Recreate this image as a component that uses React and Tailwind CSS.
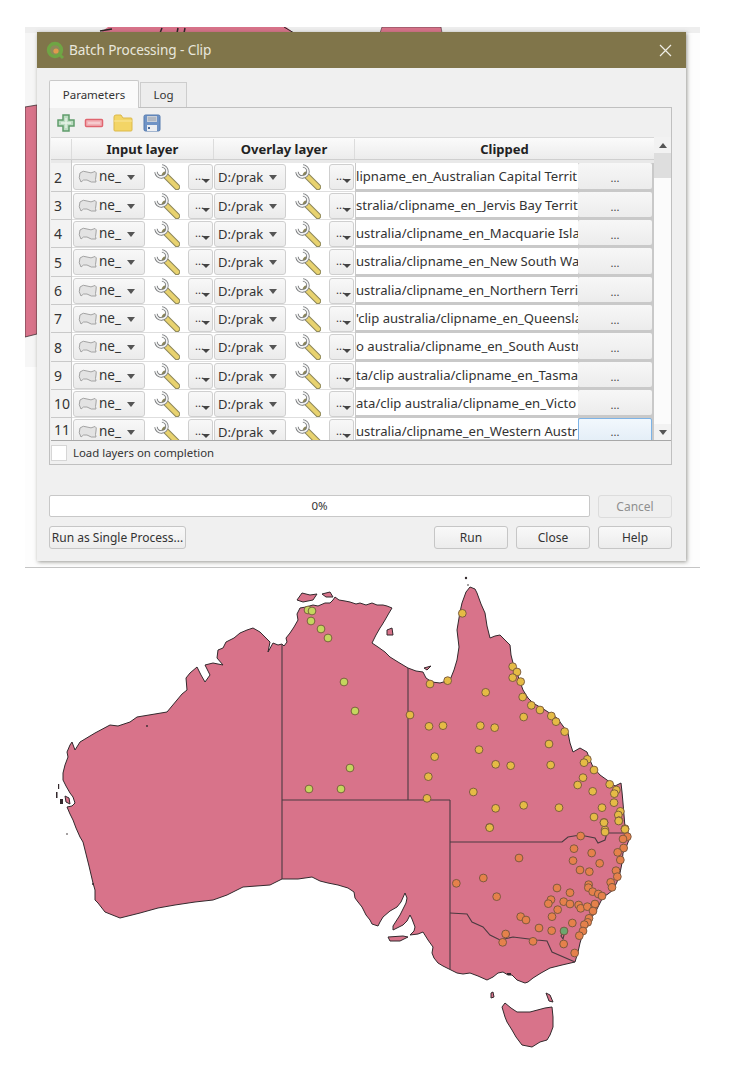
import React from "react";

const font = { fontFamily: '"Noto Sans", "Open Sans", sans-serif' };

const rows = [
  { n: "2", h: "h-[29px]", text: "lipname_en_Australian Capital Territ" },
  { n: "3", h: "h-[28px]", text: "stralia/clipname_en_Jervis Bay Territ" },
  { n: "4", h: "h-[28px]", text: "ustralia/clipname_en_Macquarie Isla" },
  { n: "5", h: "h-[29px]", text: "ustralia/clipname_en_New South Wa" },
  { n: "6", h: "h-[28px]", text: "ustralia/clipname_en_Northern Territ" },
  { n: "7", h: "h-[28px]", text: "'clip australia/clipname_en_Queensla" },
  { n: "8", h: "h-[29px]", text: "o australia/clipname_en_South Austr" },
  { n: "9", h: "h-[28px]", text: "ta/clip australia/clipname_en_Tasma" },
  { n: "10", h: "h-[28px]", text: "ata/clip australia/clipname_en_Victo" },
  { n: "11", h: "h-[24px]", text: "ustralia/clipname_en_Western Austr", last: true },
];

const yellowGreen = [[308,610],[312,611],[311,621],[321,629],[328,638],[344,682],[355,711],[350,768],[309,789],[341,789]];
const z6 = [[307,130],[210,342],[263,332],[458,290],[471,306],[458,323],[482,335],[377,367],[488,381],[514,406],[540,420],[491,441],[574,438],[588,455],[614,485],[150,435],[207,469],[249,467],[361,467],[404,473],[567,522],[357,539],[224,560],[407,583],[452,587],[572,585],[682,568],[672,578],[702,600],[669,623],[653,645],[205,620],[340,666],[698,664],[749,643],[769,660],[763,671],[762,698],[201,685],[407,715],[491,706],[597,713],[726,713],[702,741],[732,757],[781,724],[775,735],[777,752],[389,772],[795,776],[735,780]];
const yellow = z6.map(([x, y]) => [x / 3 + 360, y / 3 + 570]).concat([[689,23],[1032,8],[1076,3],[1095,28],[1035,36]].map(([x, y]) => [x / 3 + 260, y / 3 + 820]));
const orange = [[962,48],[1102,50],[1089,57],[1091,84],[942,86],[995,99],[1073,97],[939,122],[1081,120],[1019,130],[777,114],[960,150],[988,155],[1068,152],[1072,170],[670,174],[589,190],[1052,187],[986,194],[985,203],[1056,202],[891,204],[930,218],[998,215],[1015,222],[1026,228],[710,230],[873,239],[865,251],[911,245],[930,252],[956,255],[962,265],[982,260],[1005,252],[999,273],[893,269],[876,290],[782,290],[798,300],[987,295],[983,307],[973,314],[937,309],[969,333],[958,347],[837,324],[875,332],[737,342],[728,367],[819,364],[911,372],[944,399]].map(([x, y]) => [x / 3 + 260, y / 3 + 820]);

const mainland = "M282 644 L284 646 L287 642 L286 638 L290 633 L294 627 L298 620 L297 614 L300 608 L306 607 L313 605 L318 606 L325 603 L330 603 L333 600 L335 597 L339 600 L345 601 L350 602 L356 604 L360 603 L366 605 L372 603 L377 605 L383 605 L387 606 L392 608 L389 613 L385 620 L382 625 L380 628 L376 635 L372 643 L378 647 L385 652 L390 657 L398 662 L408 668 L416 671 L423 672 L426 678 L432 682 L440 683 L450 680 L454 670 L457 660 L459 647 L457 630 L460 612 L462 603 L466 592 L470 587 L475 589 L477 593 L481 604 L485 613 L487 626 L490 638 L495 636 L500 635 L505 640 L510 645 L511 655 L513 663 L518 676 L523 690 L528 698 L533 703 L545 710 L557 718 L563 726 L568 733 L570 743 L573 752 L580 748 L587 752 L590 760 L593 767 L600 775 L607 780 L615 786 L621 783 L622 792 L623 803 L624 815 L625 827 L627 830 L630 837 L627 845 L623 853 L622 863 L620 873 L617 882 L613 890 L608 894 L603 897 L599 905 L595 913 L591 918 L588 923 L583 933 L580 943 L578 952 L575 962 L562 965 L550 968 L541 973 L533 978 L528 982 L525 983 L517 980 L512 975 L508 975 L503 972 L498 973 L493 977 L487 980 L478 976 L470 973 L463 974 L457 973 L449 969 L443 966 L438 963 L434 958 L432 953 L433 947 L428 940 L423 932 L418 934 L410 935 L414 931 L415 927 L412 919 L410 915 L407 921 L403 925 L393 930 L393 926 L400 915 L406 903 L407 898 L405 893 L401 902 L397 907 L390 911 L383 917 L380 922 L378 926 L372 924 L370 920 L366 915 L362 907 L358 902 L355 898 L354 892 L348 888 L338 885 L328 883 L320 881 L312 877 L298 879 L282 879 L270 885 L243 887 L227 895 L213 900 L195 902 L175 905 L158 908 L140 913 L120 918 L105 912 L98 903 L95 900 L95 890 L93 883 L89 866 L85 850 L83 842 L80 837 L76 828 L73 820 L70 814 L67 807 L72 806 L75 803 L73 797 L70 793 L66 786 L63 780 L63 773 L65 765 L68 757 L67 752 L70 745 L72 742 L75 750 L80 742 L95 733 L110 725 L118 726 L130 722 L137 717 L143 716 L155 714 L167 712 L172 706 L177 700 L182 694 L187 690 L186 678 L190 673 L197 667 L201 675 L205 682 L210 675 L205 665 L213 663 L223 665 L217 658 L218 650 L223 648 L226 642 L230 640 L234 638 L240 633 L247 630 L253 628 L260 632 L265 637 L270 642 L268 652 L273 643 L278 645 Z";

const Dot = ({ p, fill }) => <circle cx={p[0]} cy={p[1]} r="3.9" fill={fill} stroke="#74553c" strokeWidth="0.9" />;

function AustraliaMap() {
  return (
    <svg width="750" height="500" viewBox="0 568 750 500" className="block">
      <g fill="#d8738a" stroke="#33292d" strokeWidth="1" strokeLinejoin="round">
        <path d={mainland} />
        <path d="M502 1007 L505 1003 L511 1008 L517 1012 L530 1012 L545 1008 L552 1007 L553 1017 L553 1027 L550 1035 L547 1040 L540 1042 L532 1047 L522 1045 L516 1037 L512 1030 L507 1022 L505 1017 Z" />
        <path d="M388 937 L403 936 L408 937 L400 941 L390 941 Z" />
        <path d="M546 993 L550 995 L553 1002 L549 1001 Z" />
        <path d="M491 993 L493 992 L494 997 L491 998 Z" />
        <path d="M297 600 L302 593 L310 595 L317 594 L313 600 L303 602 Z" />
        <path d="M322 594 L330 592 L333 597 L326 597 Z" />
        <path d="M387 630 L392 628 L393 635 L387 635 Z" />
        <path d="M424 668 L431 666 L427 670 Z" />
        <path d="M65 796 L69 798 L70 804 L66 802 Z" />
      </g>
      <g fill="none" stroke="#4b3a40" strokeWidth="1.1">
        <path d="M282 644 V879" />
        <path d="M282 800 H450" />
        <path d="M408 668 V800" />
        <path d="M450 800 V969" />
        <path d="M450 842 H562 L568 837 L580 835 L595 838 L598 843 L605 840 L607 833 L625 833" />
        <path d="M450 913 L467 914 L472 922 L483 927 L490 935 L500 940 L513 937 L537 940 L547 941 L552 952 L575 962" />
        <path d="M563 932 L561 936 L563 939 L564 935 Z" />
      </g>
      <g fill="#33292d">
        <circle cx="147" cy="726" r="0.9" />
        <rect x="58" y="784" width="1.2" height="5" />
        <rect x="56" y="792" width="1.5" height="6" />
        <rect x="60" y="799" width="3" height="5" />
        <circle cx="67" cy="834" r="0.8" />
        <circle cx="93" cy="884" r="1" />
        <circle cx="466" cy="578" r="1.2" />
        <circle cx="468" cy="585" r="0.8" />
        <rect x="507" y="973" width="4" height="2" />
      </g>
      {yellowGreen.map((p, i) => <Dot key={i} p={p} fill="#c4d65e" />)}
      {yellow.map((p, i) => <Dot key={i} p={p} fill="#e5bb45" />)}
      {orange.map((p, i) => <Dot key={i} p={p} fill="#e5814b" />)}
      <Dot p={[564, 931]} fill="#6da66e" />
    </svg>
  );
}

const QgisLogo = () => (
  <svg width="19" height="19" viewBox="0 0 19 19">
    <circle cx="9" cy="9" r="6.5" fill="#8d8a5a" stroke="#6fa544" strokeWidth="3.4" />
    <path d="M11 11 L17 17" stroke="#6fa544" strokeWidth="3" />
    <circle cx="10" cy="10" r="2.6" fill="#e09a4e" />
  </svg>
);

const PlusIcon = () => (
  <svg width="20" height="20" viewBox="0 0 20 20">
    <path d="M7 2 H13 V7 H18 V13 H13 V18 H7 V13 H2 V7 H7 Z" fill="#bcdcc2" stroke="#5f9c6b" strokeWidth="1.5" />
    <path d="M10 5 V15 M5 10 H15" stroke="#e8f3e9" strokeWidth="1.3" />
  </svg>
);
const MinusIcon = () => (
  <svg width="20" height="10" viewBox="0 0 20 10">
    <rect x="1.5" y="1.5" width="17" height="7" rx="1" fill="#f2b3b8" stroke="#e0656f" strokeWidth="1.5" />
    <path d="M4 5 H16" stroke="#f9dcde" strokeWidth="1.2" />
  </svg>
);
const FolderIcon = () => (
  <svg width="20" height="18" viewBox="0 0 20 18">
    <path d="M1 3 Q1 1 3 1 H8 L10 4 H18 Q19 4 19 5 V16 Q19 17 18 17 H2 Q1 17 1 16 Z" fill="#f3d566" stroke="#dcb94a" strokeWidth="1" />
    <path d="M1 7 H19" stroke="#f9e69a" strokeWidth="1" />
  </svg>
);
const SaveIcon = () => (
  <svg width="18" height="18" viewBox="0 0 18 18">
    <rect x="1" y="1" width="16" height="16" rx="1.5" fill="#6f93c6" stroke="#557aae" strokeWidth="1" />
    <rect x="4" y="2" width="10" height="6" fill="#c9cfd8" />
    <path d="M5 4 H13 M5 6 H13" stroke="#8d96a3" strokeWidth="0.8" />
    <rect x="4" y="11" width="10" height="6" fill="#eceef2" />
    <rect x="5" y="13" width="2" height="2" fill="#4a6a9a" />
  </svg>
);
const Wrench = () => (
  <svg width="26" height="26" viewBox="0 0 26 26">
    <path d="M11 11 L23 23" stroke="#8a8558" strokeWidth="6.4" strokeLinecap="round" />
    <path d="M12.5 12.5 L23 23" stroke="#e8d26f" strokeWidth="4.4" strokeLinecap="round" />
    <path d="M2 8 A5.5 5.5 0 1 0 8 2" fill="none" stroke="#77797b" strokeWidth="3.4" />
    <path d="M2 8 A5.5 5.5 0 1 0 8 2" fill="none" stroke="#f2f3f3" strokeWidth="1.8" />
  </svg>
);
const LayerIcon = () => (
  <svg width="20" height="14" viewBox="0 0 20 14" className="shrink-0">
    <path d="M2 3 Q5 0 9 2 Q13 4 17 1.5 Q19 2 18 6 Q17 10 18 12 Q13 13 9 10 Q5 9 3 12 Q0 8 2 3 Z" fill="#e3e3e3" stroke="#a3a3a3" strokeWidth="1" />
  </svg>
);
const Caret = () => <span className="shrink-0 ml-auto w-0 h-0 border-x-[4.5px] border-x-transparent border-t-[5px] border-t-[#555]" />;
const SmallCaret = () => <span className="absolute right-[2px] bottom-[6px] w-0 h-0 border-x-[4px] border-x-transparent border-t-[4px] border-t-[#444]" />;

const comboCls = "w-[72px] h-[26px] mt-[1px] flex items-center rounded-[3px] border border-[#cfcfcf] bg-gradient-to-b from-[#f8f8f8] to-[#ebebeb]";
const dotsCls = "relative w-[25px] h-[26px] mt-[1px] rounded-[3px] border border-[#cfcfcf] bg-gradient-to-b from-[#f8f8f8] to-[#ebebeb] text-[11px] text-[#333] pl-[6px] pt-[5px] leading-none";

function Row({ r }) {
  const last = r.last;
  return (
    <div className={`${r.h} flex shrink-0 overflow-hidden`}>
      <div className="w-[21px] shrink-0 bg-[#f3f3f3] border-r border-b border-[#c9c9c9] flex items-center pl-[3px] text-[14px] text-[#333]">{r.n}</div>
      <div className="w-[142px] shrink-0 flex border-b border-[#dedede] bg-white">
        <div className={`${comboCls} ml-[1px] pl-[4px] pr-[9px]`}>
          <LayerIcon />
          <span className="text-[13.5px] text-[#333] ml-[1px] leading-none">ne_</span>
          <Caret />
        </div>
        <div className="w-[43px] shrink-0 flex items-start justify-center pt-[1px]"><Wrench /></div>
        <div className={dotsCls}>...<SmallCaret /></div>
      </div>
      <div className="w-[141px] shrink-0 flex border-b border-[#dedede] bg-white">
        <div className={`${comboCls} pl-[3px] pr-[8px]`}>
          <span className="text-[13px] text-[#333] whitespace-nowrap leading-none">D:/prak</span>
          <Caret />
        </div>
        <div className="w-[43px] shrink-0 flex items-start justify-center pt-[1px]"><Wrench /></div>
        <div className={dotsCls}>...<SmallCaret /></div>
      </div>
      <div className="w-[299px] shrink-0 flex pl-[1px] bg-[#c9c9c9]">
        <div className="w-[222px] shrink-0 bg-white mb-[3px] overflow-hidden whitespace-nowrap text-[13.1px] text-[#333] leading-[26px]">{r.text}</div>
        <div className={last
          ? "w-[74px] shrink-0 rounded-[2px] border border-[#7db3e6] bg-gradient-to-b from-[#f2f8fd] to-[#e4eef7] text-center text-[11px] text-[#444] leading-[26px]"
          : "w-[74px] shrink-0 mb-[3px] rounded-[2px] bg-gradient-to-b from-[#f7f7f7] to-[#ececec] text-center text-[11px] text-[#444] leading-[30px]"}>...</div>
      </div>
    </div>
  );
}

const btn = "h-[23px] rounded-[3px] border border-[#c6c6c6] bg-gradient-to-b from-[#f9f9f9] to-[#ececec] flex items-center justify-center text-[12px] text-[#333]";

function Dialog() {
  return (
    <div className="relative w-[649px] h-[529px] bg-[#f0f0f0] flex flex-col shadow-[1px_1px_4px_rgba(70,70,60,0.55)]">
      <div className="h-[36px] shrink-0 bg-[#80754a] flex items-center pl-[9px] pr-[14px] text-[#e9e7dc]">
        <QgisLogo />
        <span className="ml-[4px] text-[13.6px] tracking-[-0.1px]">Batch Processing - Clip</span>
        <svg className="ml-auto" width="13" height="13" viewBox="0 0 13 13"><path d="M1 1 L12 12 M12 1 L1 12" stroke="#efeee6" strokeWidth="1.2" /></svg>
      </div>
      <div className="flex-1 pl-[12px] pr-[14px] pt-[12px] flex flex-col">
        <div className="flex h-[27px] items-end text-[11.5px] text-[#333]">
          <div className="w-[90px] h-[28px] -mb-[1px] relative bg-[#fafafa] border border-b-0 border-[#c9c9c9] rounded-t-[2px] flex items-center justify-center">Parameters</div>
          <div className="w-[47px] h-[25px] ml-[1px] bg-[#ededed] border border-b-0 border-[#cdcdcd] flex items-center justify-center">Log</div>
        </div>
        <div className="h-[358px] border border-[#c0c0c0] pl-[1px] flex flex-col">
          <div className="h-[29px] shrink-0 flex items-center">
            <span className="ml-[5px]"><PlusIcon /></span>
            <span className="ml-[8px]"><MinusIcon /></span>
            <span className="ml-[9px]"><FolderIcon /></span>
            <span className="ml-[10px]"><SaveIcon /></span>
          </div>
          <div className="w-[620px] h-[304px] flex border-b border-[#a8a8a8] overflow-hidden">
            <div className="w-[603px] shrink-0 flex flex-col overflow-hidden bg-[#e6e6e6]">
              <div className="h-[22px] shrink-0 flex pt-[1px] text-[13px] font-bold text-[#222] bg-gradient-to-b from-[#fbfbfb] to-[#ececec] border-t border-[#d8d8d8]">
                <div className="w-[21px] border-r border-[#dcdcdc]" />
                <div className="w-[142px] border-r border-[#dcdcdc] flex items-center justify-center leading-none">Input layer</div>
                <div className="w-[141px] border-r border-[#dcdcdc] flex items-center justify-center leading-none">Overlay layer</div>
                <div className="w-[299px] flex items-center justify-center leading-none">Clipped</div>
              </div>
              <div className="h-[4px] shrink-0 flex border-t border-[#cfcfcf] bg-[#e9e9e9]"><div className="w-[21px] border-r border-[#c9c9c9]" /></div>
              {rows.map((r) => <Row key={r.n} r={r} />)}
            </div>
            <div className="w-[17px] shrink-0 bg-[#fbfbfb] flex flex-col">
              <div className="h-[16px] shrink-0 flex items-center justify-center bg-[#f2f2f2]">
                <span className="w-0 h-0 border-x-[4.5px] border-x-transparent border-b-[5px] border-b-[#555]" />
              </div>
              <div className="h-[25px] shrink-0 bg-[#dedede]" />
              <div className="flex-1" />
              <div className="h-[16px] shrink-0 flex items-center justify-center bg-[#f2f2f2]">
                <span className="w-0 h-0 border-x-[4.5px] border-x-transparent border-t-[5px] border-t-[#555]" />
              </div>
            </div>
          </div>
          <div className="flex-1 flex items-center">
            <span className="w-[16px] h-[16px] bg-white border border-[#d6d6d6]" />
            <span className="ml-[6px] text-[11.4px] text-[#333]">Load layers on completion</span>
          </div>
        </div>
        <div className="mt-[30px] flex gap-[8px]">
          <div className="w-[541px] h-[22px] bg-white border border-[#c8c8c8] rounded-[2px] flex items-center justify-center text-[11.5px] text-[#333]">0%</div>
          <div className="w-[74px] h-[23px] rounded-[3px] border border-[#dcdcdc] bg-[#efefef] flex items-center justify-center text-[12px] text-[#8f8f8f]">Cancel</div>
        </div>
        <div className="mt-[8px] flex">
          <div className={`${btn} w-[137px]`}>Run as Single Process...</div>
          <div className={`${btn} w-[74px] ml-auto`}>Run</div>
          <div className={`${btn} w-[74px] ml-[8px]`}>Close</div>
          <div className={`${btn} w-[74px] ml-[8px]`}>Help</div>
        </div>
      </div>
    </div>
  );
}

export default function App() {
  return (
    <div className="w-[750px] h-[1068px] bg-white overflow-hidden" style={font}>
      <div className="h-[568px] pl-[25px] pt-[27px]">
        <div className="relative w-[675px] h-[541px] bg-[#fdfdfd] border-b border-[#c4c4c4]">
          <svg className="absolute left-0 top-0" width="675" height="340" viewBox="25 27 675 340">
            <rect x="25" y="27" width="675" height="6" fill="#eeeeee" />
            <rect x="25" y="33" width="12" height="334" fill="#f6f6f6" />
            <path d="M25 107 L37 105 V334 L25 337 Z" fill="#d8738a" stroke="#3c2f33" strokeWidth="0.8" />
            <path d="M108 27 H286 L294 33 H100 Z" fill="#d8738a" />
            <path d="M100 31 L112 29 M160 33 L162 28 M177 33 L178 28 M184 33 L185 28" stroke="#2c2426" strokeWidth="1.5" />
            <path d="M284 27 L294 33" stroke="#2c2426" strokeWidth="1" />
            <path d="M380 33 L382 27 H441 L442 33 Z" fill="#d8738a" stroke="#3c2f33" strokeWidth="0.6" />
          </svg>
          <div className="relative ml-[12px] pt-[5px]"><Dialog /></div>
        </div>
      </div>
      <AustraliaMap />
    </div>
  );
}
